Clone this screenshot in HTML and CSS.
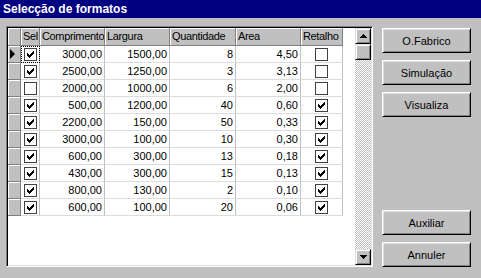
FILE: index.html
```html
<!DOCTYPE html>
<html>
<head>
<meta charset="utf-8">
<link rel="stylesheet" href="styles.css">
</head>
<body>
<div class="window">
  <div class="titlebar">Selecção de formatos</div>
  <div class="content">
    <div class="gridbox">
      <div class="grid">
        <div class="hc ind"></div><div class="hc">Sel</div><div class="hc">Comprimento</div><div class="hc">Largura</div><div class="hc">Quantidade</div><div class="hc">Area</div><div class="hc">Retalho</div>

        <div class="ic"><span class="arrow"></span></div><div class="c cb focus"><span class="box on"></span></div><div class="c n">3000,00</div><div class="c n">1500,00</div><div class="c n">8</div><div class="c n">4,50</div><div class="c cb"><span class="box"></span></div>
        <div class="ic"></div><div class="c cb"><span class="box on"></span></div><div class="c n">2500,00</div><div class="c n">1250,00</div><div class="c n">3</div><div class="c n">3,13</div><div class="c cb"><span class="box"></span></div>
        <div class="ic"></div><div class="c cb"><span class="box"></span></div><div class="c n">2000,00</div><div class="c n">1000,00</div><div class="c n">6</div><div class="c n">2,00</div><div class="c cb"><span class="box"></span></div>
        <div class="ic"></div><div class="c cb"><span class="box on"></span></div><div class="c n">500,00</div><div class="c n">1200,00</div><div class="c n">40</div><div class="c n">0,60</div><div class="c cb"><span class="box on"></span></div>
        <div class="ic"></div><div class="c cb"><span class="box on"></span></div><div class="c n">2200,00</div><div class="c n">150,00</div><div class="c n">50</div><div class="c n">0,33</div><div class="c cb"><span class="box on"></span></div>
        <div class="ic"></div><div class="c cb"><span class="box on"></span></div><div class="c n">3000,00</div><div class="c n">100,00</div><div class="c n">10</div><div class="c n">0,30</div><div class="c cb"><span class="box on"></span></div>
        <div class="ic"></div><div class="c cb"><span class="box on"></span></div><div class="c n">600,00</div><div class="c n">300,00</div><div class="c n">13</div><div class="c n">0,18</div><div class="c cb"><span class="box on"></span></div>
        <div class="ic"></div><div class="c cb"><span class="box on"></span></div><div class="c n">430,00</div><div class="c n">300,00</div><div class="c n">15</div><div class="c n">0,13</div><div class="c cb"><span class="box on"></span></div>
        <div class="ic"></div><div class="c cb"><span class="box on"></span></div><div class="c n">800,00</div><div class="c n">130,00</div><div class="c n">2</div><div class="c n">0,10</div><div class="c cb"><span class="box on"></span></div>
        <div class="ic"></div><div class="c cb"><span class="box on"></span></div><div class="c n">600,00</div><div class="c n">100,00</div><div class="c n">20</div><div class="c n">0,06</div><div class="c cb"><span class="box on"></span></div>
      </div>
      <div class="vscroll">
        <div class="sbtn"><svg width="7" height="4" viewBox="0 0 7 4"><path d="M3 0h1v1h1v1h1v1h1v1H0V3h1V2h1V1h1z" fill="#000"/></svg></div>
        <div class="thumb"></div>
        <div class="track"></div>
        <div class="sbtn"><svg width="7" height="4" viewBox="0 0 7 4"><path d="M0 0h7v1H6v1H5v1H4v1H3V3H2V2H1V1H0z" fill="#000"/></svg></div>
      </div>
    </div>
    <div class="buttons">
      <button class="btn">O.Fabrico</button>
      <button class="btn">Simulação</button>
      <button class="btn">Visualiza</button>
      <div class="spacer"></div>
      <button class="btn">Auxiliar</button>
      <button class="btn">Annuler</button>
    </div>
  </div>
</div>
</body>
</html>
```
FILE: styles.css
```css
html, body {
  margin: 0;
  padding: 0;
  background: #c0c0c0;
}
body {
  font-family: "Liberation Sans", Arial, sans-serif;
  font-size: 11px;
  color: #000;
}
.window {
  width: 481px;
  height: 278px;
  display: flex;
  flex-direction: column;
  background: #c0c0c0;
}
.titlebar {
  height: 18px;
  background: #000080;
  color: #fff;
  font-weight: bold;
  font-size: 12px;
  line-height: 18px;
  padding-left: 3px;
  box-sizing: border-box;
}
.content {
  display: flex;
  padding: 8px 0 0 6px;
}
.gridbox {
  width: 367px;
  height: 241px;
  box-sizing: border-box;
  border-top: 1px solid #808080;
  border-left: 1px solid #808080;
  border-right: 1px solid #fff;
  border-bottom: 1px solid #fff;
  box-shadow: inset 1px 1px #000, inset -1px -1px #dfdfdf;
  padding: 1px;
  display: flex;
  background: #fff;
}
.grid {
  flex: 1;
  display: grid;
  grid-template-columns: 13px 19px 65px 65px 66px 65px 42px;
  grid-template-rows: 18px;
  grid-auto-rows: 17px;
  align-content: start;
  background: #fff;
}
.hc {
  background: #c0c0c0;
  box-sizing: border-box;
  border-right: 1px solid #808080;
  border-bottom: 1px solid #808080;
  box-shadow: inset 1px 1px #fff;
  padding: 0 0 0 2px;
  line-height: 17px;
  letter-spacing: -0.35px;
  white-space: nowrap;
  overflow: hidden;
}
.ic {
  background: #c0c0c0;
  box-sizing: border-box;
  border-right: 1px solid #808080;
  border-bottom: 1px solid #808080;
  box-shadow: inset 1px 1px #fff;
  display: flex;
  align-items: center;
  padding-left: 2px;
}
.arrow {
  width: 0;
  height: 0;
  border-top: 5px solid transparent;
  border-bottom: 5px solid transparent;
  border-left: 5px solid #000;
}
.c {
  box-sizing: border-box;
  border-right: 1px solid #c0c0c0;
  border-bottom: 1px solid #dcdcdc;
  line-height: 16px;
  white-space: nowrap;
  overflow: hidden;
}
.n {
  text-align: right;
  padding-right: 2px;
}
.cb {
  display: flex;
  align-items: center;
  justify-content: center;
}
.focus {
  outline: 1px dotted #000;
  outline-offset: -1px;
}
.box {
  width: 13px;
  height: 13px;
  box-sizing: border-box;
  border: 1px solid #404040;
  background: #fff;
  position: relative;
}
.box.on::after {
  content: "";
  position: absolute;
  left: 2px;
  top: 2px;
  width: 7px;
  height: 7px;
  background: no-repeat center/7px 7px url("data:image/svg+xml;utf8,<svg xmlns='http://www.w3.org/2000/svg' width='7' height='7' viewBox='0 0 7 7'><path d='M6 0h1v3H6v1H5v1H4v1H3v1H2V6H1V5H0V2h1v1h1v1h1V3h1V2h1V1h1z' fill='black'/></svg>");
}
.vscroll {
  width: 16px;
  display: flex;
  flex-direction: column;
}
.sbtn, .thumb {
  width: 16px;
  height: 16px;
  box-sizing: border-box;
  background: #c0c0c0;
  border-top: 1px solid #dfdfdf;
  border-left: 1px solid #dfdfdf;
  border-right: 1px solid #000;
  border-bottom: 1px solid #000;
  box-shadow: inset 1px 1px #fff, inset -1px -1px #808080;
  display: flex;
  align-items: center;
  justify-content: center;
}
.track {
  flex: 1;
  background: repeating-conic-gradient(#fff 0 25%, #c0c0c0 0 50%) 0 0 / 2px 2px;
}
.buttons {
  display: flex;
  flex-direction: column;
  gap: 7px;
  margin-left: 9px;
  margin-top: 2px;
  height: 239px;
}
.spacer {
  flex: 1;
}
.btn {
  width: 89px;
  height: 25px;
  margin: 0;
  padding: 0;
  font-family: "Liberation Sans", Arial, sans-serif;
  font-size: 11px;
  color: #000;
  background: #c0c0c0;
  box-sizing: border-box;
  border-top: 1px solid #fff;
  border-left: 1px solid #fff;
  border-right: 1px solid #000;
  border-bottom: 1px solid #000;
  box-shadow: inset 1px 1px #dfdfdf, inset -1px -1px #808080;
}
```
